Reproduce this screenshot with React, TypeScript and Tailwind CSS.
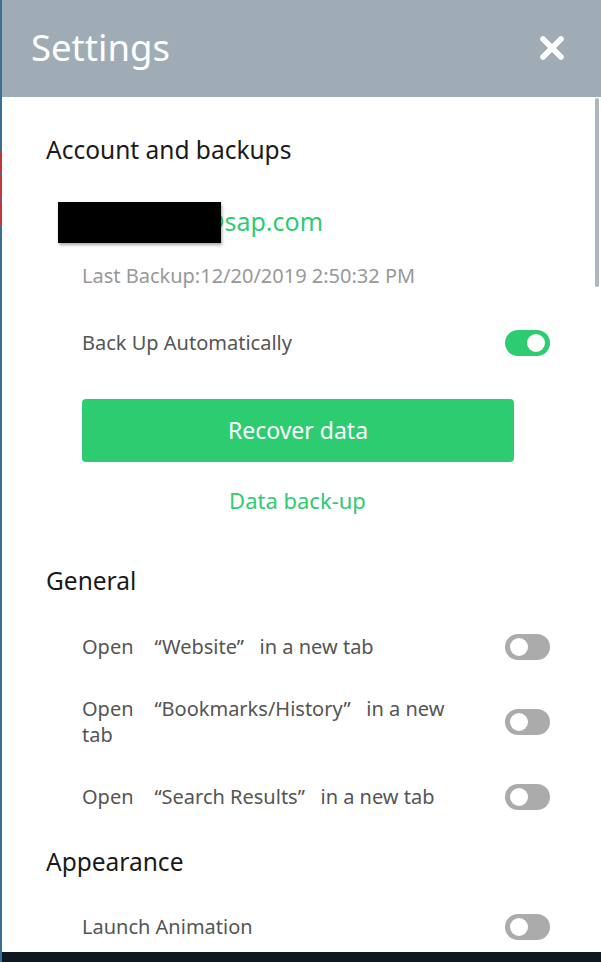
import React from "react";

const Toggle = ({ on = false }: { on?: boolean }) => (
  <div
    className={`flex h-[26px] w-[45px] shrink-0 items-center rounded-full px-[5px] ${
      on ? "justify-end bg-[#2ecc71]" : "justify-start bg-[#ababab]"
    }`}
  >
    <div className="h-[18px] w-[18px] rounded-full bg-white" />
  </div>
);

const Row = ({ children, on, className = "" }: { children: React.ReactNode; on?: boolean; className?: string }) => (
  <div className={`flex items-center justify-between pl-[80px] pr-[51px] ${className}`}>
    <div className="max-w-[375px] whitespace-pre-wrap text-[20px] leading-[26px] text-[#555]">{children}</div>
    <Toggle on={on} />
  </div>
);

const OpenRow = ({ what, className = "" }: { what: string; className?: string }) => (
  <Row className={className}>
    <span>Open</span>
    {"    "}
    <span>“</span>
    <span>{what}</span>
    <span>”</span>
    {"   "}
    <span>in a new</span> <span>tab</span>
  </Row>
);

const SectionTitle = ({ children, className = "" }: { children: React.ReactNode; className?: string }) => (
  <h2 className={`pl-[44px] text-[24.5px] leading-[30px] text-[#1a1a1a] ${className}`}>{children}</h2>
);

export default function App() {
  return (
    <div className="relative flex h-[962px] w-[601px] flex-col overflow-hidden bg-[#0e1821] font-['Noto_Sans',sans-serif]">
      {/* window edge behind the panel */}
      <div className="absolute left-0 top-0 h-full w-[2px] bg-[#3b6e98]">
        <div className="mt-[152px] h-[21px] bg-[#c8343c]" />
        <div className="mt-[2px] h-[22px] bg-[#c8343c]" />
        <div className="mt-[2px] h-[26px] bg-[#c8343c]" />
      </div>

      <div className="relative ml-[2px] flex h-[952px] flex-col overflow-hidden bg-white">
        <header className="flex h-[97px] shrink-0 items-center justify-between bg-[#a0acb5] pl-[29px] pr-[36px]">
          <h1 className="pb-[2px] text-[36.5px] leading-none text-white">Settings</h1>
          <svg width="26" height="26" viewBox="0 0 26 26" className="mb-[1px]">
            <path d="M4 4 L22 22 M22 4 L4 22" stroke="white" strokeWidth="5.5" strokeLinecap="round" />
          </svg>
        </header>

        {/* scrollbar */}
        <div className="absolute right-[2px] top-[98px] h-[189px] w-[4px] rounded-full bg-[#adb5bf]" />

        <SectionTitle className="mt-[38px]">Account and backups</SectionTitle>

        <div className="relative mt-[36px] flex h-[42px] items-center pl-[200px]">
          <div className="absolute left-[56px] top-[1px] h-[41px] w-[163px] bg-black shadow-[1px_2px_3px_rgba(0,0,0,0.35)]" />
          <span className="text-[25px] text-[#2ecc71]">@sap.com</span>
        </div>

        <div className="mt-[20px] pl-[80px] text-[20px] leading-[26px] text-[#999]">
          Last Backup:12/20/2019 2:50:32 PM
        </div>

        <Row on className="mt-[41px]">Back Up Automatically</Row>

        <div className="ml-[80px] mr-[87px] mt-[43px] flex h-[63px] items-center justify-center rounded-[4px] bg-[#2ecc71] text-[23px] text-white">
          Recover data
        </div>

        <div className="mt-[24px] pr-[8px] text-center text-[22px] leading-[28px] text-[#2ecc71]">Data back-up</div>

        <SectionTitle className="mt-[52px]">General</SectionTitle>

        <OpenRow className="mt-[38px]" what="Website" />
        <OpenRow className="mt-[36px]" what="Bookmarks/History" />
        <OpenRow className="mt-[36px]" what="Search Results" />

        <SectionTitle className="mt-[37px]">Appearance</SectionTitle>

        <Row className="mt-[37px]">Launch Animation</Row>
      </div>
    </div>
  );
}
